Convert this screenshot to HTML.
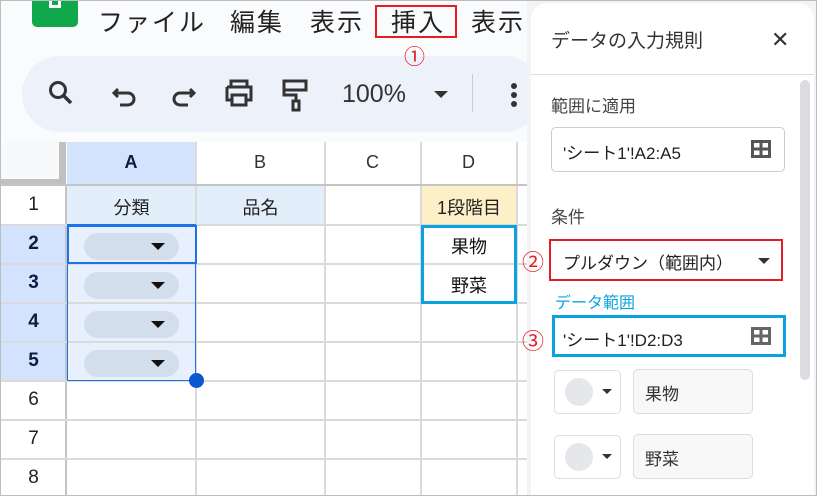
<!DOCTYPE html>
<html><head><meta charset="utf-8"><style>
*{margin:0;padding:0;box-sizing:border-box}
body{width:817px;height:496px;overflow:hidden;background:#fff;font-family:"Liberation Sans","Noto Sans CJK JP",sans-serif;position:relative}
.a{position:absolute}
.jp{font-family:"Liberation Sans","Noto Sans CJK JP",sans-serif}
.hl{position:absolute;height:2px;background:#dadada}
.vl{position:absolute;width:2px;background:#dadada}
.rn{position:absolute;left:1px;width:65px;text-align:center;font-size:19px;color:#222}
.pill{position:absolute;left:84px;width:95px;height:27px;border-radius:14px;background:#d3deed}
.pill:after{content:"";position:absolute;right:14px;top:10px;border-left:7px solid transparent;border-right:7px solid transparent;border-top:7px solid #111}
.m{position:absolute;top:3px;font-size:25px;color:#222;white-space:nowrap;letter-spacing:2px}
</style></head><body>
<!-- top area -->
<div class="a" style="left:0;top:0;width:530px;height:142px;background:#f9fbfd"></div>
<div class="a" style="left:32px;top:0;width:46px;height:27px;background:#0fa84a;border-radius:0 0 5px 5px"></div>
<div class="a" style="left:49px;top:0;width:12px;height:8px;border:3px solid #fff;border-top:none"></div>
<div class="m jp" style="left:98px">ファイル</div>
<div class="m jp" style="left:230px">編集</div>
<div class="m jp" style="left:310px">表示</div>
<div class="m jp" style="left:391px">挿入</div>
<div class="m jp" style="left:471px">表示</div>
<div class="a" style="left:22px;top:56px;width:520px;height:76px;border-radius:38px;background:#edf2fa"></div>
<div class="a" style="left:375px;top:5px;width:82px;height:33px;border:2px solid #e41c25"></div>
<div class="a" style="left:404px;top:41px;font-size:21px;color:#e41c25;z-index:5">①</div>
<svg class="a" style="left:45px;top:78px" width="32" height="30" viewBox="0 0 32 30"><circle cx="13" cy="12" r="7.5" fill="none" stroke="#333" stroke-width="3"/><path d="M18 17l8 8" stroke="#333" stroke-width="3.5"/></svg>
<svg class="a" style="left:112px;top:82px" width="28" height="28" viewBox="0 0 28 28"><path d="M6 7l-4 4 4 4M3 11h13a6 6 0 0 1 0 12H8" fill="none" stroke="#333" stroke-width="3"/></svg>
<svg class="a" style="left:168px;top:82px" width="28" height="28" viewBox="0 0 28 28"><path d="M22 7l4 4-4 4M25 11H12a6 6 0 0 0 0 12h8" fill="none" stroke="#333" stroke-width="3"/></svg>
<svg class="a" style="left:223px;top:78px" width="32" height="30" viewBox="0 0 32 30"><path d="M8 9V3h16v6M4 9h24v13h-4M8 22H4V9" fill="none" stroke="#333" stroke-width="3"/><rect x="9" y="17" width="14" height="10" fill="none" stroke="#333" stroke-width="3"/></svg>
<svg class="a" style="left:281px;top:78px" width="30" height="34" viewBox="0 0 30 34"><rect x="3" y="3" width="22" height="9" fill="none" stroke="#333" stroke-width="3"/><path d="M3 12v5h12v6" fill="none" stroke="#333" stroke-width="3"/><rect x="12" y="23" width="6" height="9" fill="none" stroke="#333" stroke-width="3"/></svg>
<div class="a" style="left:342px;top:80px;font-size:25px;color:#333">100%</div>
<div class="a" style="left:434px;top:91px;border-left:7px solid transparent;border-right:7px solid transparent;border-top:7px solid #333"></div>
<div class="a" style="left:472px;top:74px;width:1px;height:38px;background:#ccc"></div>
<div class="a" style="left:511px;top:83px;width:6px;height:6px;border-radius:3px;background:#333;box-shadow:0 9px 0 #333,0 18px 0 #333"></div>
<!-- grid -->
<div class="a" style="left:0;top:142px;width:530px;height:354px;background:#fff"></div>
<div class="a" style="left:1px;top:142px;width:58px;height:37px;background:#f8f9fa"></div>
<div class="a" style="left:59px;top:142px;width:7px;height:43px;background:#c0c0c0"></div>
<div class="a" style="left:1px;top:179px;width:65px;height:6px;background:#c0c0c0"></div>
<div class="a" style="left:67px;top:142px;width:128px;height:43px;background:#d3e3fd"></div>
<div class="a" style="left:67px;top:186px;width:258px;height:38px;background:#e3eefb"></div>
<div class="a" style="left:421px;top:186px;width:96px;height:38px;background:#fdefc8"></div>
<div class="a" style="left:67px;top:225px;width:129px;height:155px;background:#e8f0fd"></div>
<div class="a" style="left:1px;top:225px;width:65px;height:155px;background:#d3e3fd"></div>
<div class="vl" style="left:195px;top:142px;height:354px"></div>
<div class="vl" style="left:324px;top:142px;height:354px"></div>
<div class="vl" style="left:420px;top:142px;height:354px"></div>
<div class="vl" style="left:516px;top:142px;height:354px"></div>
<div class="vl" style="left:65px;top:185px;height:311px;background:#c4c4c4"></div>
<div class="hl" style="left:1px;top:184px;width:529px;background:#c4c4c4"></div>
<div class="hl" style="left:1px;top:224px;width:529px"></div>
<div class="hl" style="left:1px;top:263px;width:529px"></div>
<div class="hl" style="left:1px;top:302px;width:529px"></div>
<div class="hl" style="left:1px;top:341px;width:529px"></div>
<div class="hl" style="left:1px;top:380px;width:529px"></div>
<div class="hl" style="left:1px;top:419px;width:529px"></div>
<div class="hl" style="left:1px;top:458px;width:529px"></div>
<div class="a" style="left:67px;top:152px;width:128px;text-align:center;font-size:18px;font-weight:bold;color:#0b1d40">A</div>
<div class="a" style="left:196px;top:152px;width:128px;text-align:center;font-size:18px;color:#333">B</div>
<div class="a" style="left:325px;top:152px;width:95px;text-align:center;font-size:18px;color:#333">C</div>
<div class="a" style="left:421px;top:152px;width:95px;text-align:center;font-size:18px;color:#333">D</div>
<div class="rn" style="top:194px">1</div>
<div class="rn" style="top:233px;font-weight:bold;color:#0b1d40">2</div>
<div class="rn" style="top:272px;font-weight:bold;color:#0b1d40">3</div>
<div class="rn" style="top:311px;font-weight:bold;color:#0b1d40">4</div>
<div class="rn" style="top:350px;font-weight:bold;color:#0b1d40">5</div>
<div class="rn" style="top:389px">6</div>
<div class="rn" style="top:428px">7</div>
<div class="rn" style="top:467px">8</div>
<div class="a jp" style="left:67px;top:194px;width:129px;text-align:center;font-size:18px;color:#222">分類</div>
<div class="a jp" style="left:196px;top:194px;width:129px;text-align:center;font-size:18px;color:#222">品名</div>
<div class="a jp" style="left:421px;top:194px;width:96px;text-align:center;font-size:18px;color:#222">1段階目</div>
<div class="pill" style="top:233px"></div>
<div class="pill" style="top:272px"></div>
<div class="pill" style="top:311px"></div>
<div class="pill" style="top:350px"></div>
<div class="a" style="left:67px;top:224px;width:129px;height:157px;border:1px solid #1a73e8"></div>
<div class="a" style="left:67px;top:225px;width:130px;height:39px;border:2px solid #1a73e8"></div>
<div class="a" style="left:189px;top:373px;width:15px;height:15px;border-radius:8px;background:#0b57d0"></div>
<div class="a" style="left:421px;top:225px;width:96px;height:79px;border:3px solid #0aa3e0"></div>
<div class="a jp" style="left:421px;top:233px;width:96px;text-align:center;font-size:18px;color:#111">果物</div>
<div class="a jp" style="left:421px;top:272px;width:96px;text-align:center;font-size:18px;color:#111">野菜</div>
<!-- panel -->
<div class="a" style="left:527px;top:0;width:290px;height:496px;background:#f1f3f4"></div>
<div class="a" style="left:531px;top:3px;width:283px;height:492px;background:#fff;border-radius:16px 16px 0 0"></div>
<div class="a jp" style="left:551px;top:26px;font-size:19px;color:#333">データの入力規則</div>
<div class="a" style="left:771px;top:27px;font-size:22px;color:#333">✕</div>
<div class="a" style="left:531px;top:74px;width:283px;height:1px;background:#ddd"></div>
<div class="a" style="left:800px;top:80px;width:10px;height:300px;border-radius:5px;background:#dadce0"></div>
<div class="a jp" style="left:551px;top:92px;font-size:17px;color:#444">範囲に適用</div>
<div class="a" style="left:551px;top:127px;width:234px;height:45px;border:1px solid #ccc;border-radius:5px"></div>
<div class="a jp" style="left:563px;top:139px;font-size:17px;color:#222">'シート1'!A2:A5</div>
<svg class="a" style="left:751px;top:140px" width="20" height="18" viewBox="0 0 20 18"><rect x="1.5" y="1.5" width="17" height="15" fill="none" stroke="#555" stroke-width="3"/><path d="M10 1v16M1 9h18" stroke="#555" stroke-width="3"/></svg>
<div class="a jp" style="left:551px;top:203px;font-size:17px;color:#444">条件</div>
<div class="a" style="left:549px;top:239px;width:234px;height:42px;border:2px solid #e41c25"></div>
<div class="a jp" style="left:563px;top:249px;font-size:17px;color:#222">プルダウン（範囲内）</div>
<div class="a" style="left:758px;top:258px;border-left:6px solid transparent;border-right:6px solid transparent;border-top:6px solid #333"></div>
<div class="a" style="left:522px;top:245px;font-size:22px;color:#e41c25">②</div>
<div class="a jp" style="left:555px;top:289px;font-size:16px;color:#0aa3e0">データ範囲</div>
<div class="a" style="left:552px;top:315px;width:234px;height:42px;border:3px solid #0aa3e0"></div>
<div class="a jp" style="left:563px;top:326px;font-size:17px;color:#222">'シート1'!D2:D3</div>
<svg class="a" style="left:751px;top:327px" width="20" height="18" viewBox="0 0 20 18"><rect x="1.5" y="1.5" width="17" height="15" fill="none" stroke="#666" stroke-width="3"/><path d="M10 1v16M1 9h18" stroke="#666" stroke-width="3"/></svg>
<div class="a" style="left:522px;top:324px;font-size:22px;color:#e41c25">③</div>
<div class="a" style="left:554px;top:370px;width:67px;height:44px;border:1px solid #ddd;border-radius:5px"></div>
<div class="a" style="left:565px;top:378px;width:28px;height:28px;border-radius:14px;background:#e6e7ea"></div>
<div class="a" style="left:602px;top:389px;border-left:5px solid transparent;border-right:5px solid transparent;border-top:5px solid #333"></div>
<div class="a" style="left:633px;top:369px;width:120px;height:45px;border:1px solid #ddd;border-radius:5px;background:#f8f8f8"></div>
<div class="a jp" style="left:645px;top:380px;font-size:17px;color:#333">果物</div>
<div class="a" style="left:554px;top:435px;width:67px;height:44px;border:1px solid #ddd;border-radius:5px"></div>
<div class="a" style="left:565px;top:443px;width:28px;height:28px;border-radius:14px;background:#e6e7ea"></div>
<div class="a" style="left:602px;top:454px;border-left:5px solid transparent;border-right:5px solid transparent;border-top:5px solid #333"></div>
<div class="a" style="left:633px;top:434px;width:120px;height:45px;border:1px solid #ddd;border-radius:5px;background:#f8f8f8"></div>
<div class="a jp" style="left:645px;top:445px;font-size:17px;color:#333">野菜</div>
<!-- outer border -->
<div class="a" style="left:0;top:0;width:817px;height:496px;border:1px solid #bdbdbd"></div>
</body></html>
